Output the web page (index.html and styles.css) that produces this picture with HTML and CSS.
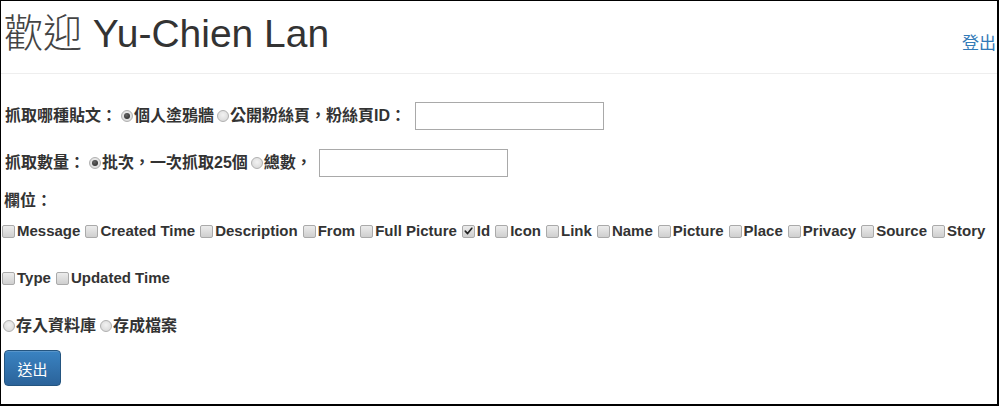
FILE: index.html
```html
<!DOCTYPE html>
<html lang="zh-Hant">
<head>
<meta charset="utf-8">
<title>歡迎</title>
<link rel="stylesheet" href="styles.css">
</head>
<body>
<div class="frame">
  <header class="header">
    <h1 class="title"><span class="cjk-light">歡迎</span> Yu-Chien Lan</h1>
    <a class="logout" href="#">登出</a>
  </header>
  <form class="form">
    <div class="row row-first">
      <span class="label zh">抓取哪種貼文：</span>
      <label class="opt"><span class="radio checked"></span><span class="zh">個人塗鴉牆</span></label>
      <label class="opt"><span class="radio"></span><span class="zh">公開粉絲頁，粉絲頁ID：</span></label>
      <span class="field field-id"></span>
    </div>
    <div class="row row-second">
      <span class="label zh">抓取數量：</span>
      <label class="opt"><span class="radio checked"></span><span class="zh">批次，一次抓取25個</span></label>
      <label class="opt"><span class="radio"></span><span class="zh">總數，</span></label>
      <span class="field field-total"></span>
    </div>
    <div class="line zh">欄位：</div>
    <div class="checks">
      <label class="opt"><span class="box"></span>Message</label>
      <label class="opt"><span class="box"></span>Created Time</label>
      <label class="opt"><span class="box"></span>Description</label>
      <label class="opt"><span class="box"></span>From</label>
      <label class="opt"><span class="box"></span>Full Picture</label>
      <label class="opt"><span class="box checked"><svg viewBox="0 0 12 12" width="12" height="12"><path d="M2.5 6.2 L5 8.8 L9.6 3" fill="none" stroke="#222" stroke-width="1.8" stroke-linecap="round" stroke-linejoin="round"/></svg></span>Id</label>
      <label class="opt"><span class="box"></span>Icon</label>
      <label class="opt"><span class="box"></span>Link</label>
      <label class="opt"><span class="box"></span>Name</label>
      <label class="opt"><span class="box"></span>Picture</label>
      <label class="opt"><span class="box"></span>Place</label>
      <label class="opt"><span class="box"></span>Privacy</label>
      <label class="opt"><span class="box"></span>Source</label>
      <label class="opt"><span class="box"></span>Story</label>
      <label class="opt"><span class="box"></span>Type</label>
      <label class="opt"><span class="box"></span>Updated Time</label>
    </div>
    <div class="line line-save">
      <label class="opt"><span class="radio"></span><span class="zh">存入資料庫</span></label>
      <label class="opt"><span class="radio"></span><span class="zh">存成檔案</span></label>
    </div>
    <button class="submit" type="button">送出</button>
  </form>
</div>
</body>
</html>
```
FILE: styles.css
```css
html, body {
  margin: 0;
  padding: 0;
  background: #fff;
}
.frame {
  box-sizing: border-box;
  width: 999px;
  height: 406px;
  border-top: 1px solid #000;
  border-left: 1px solid #000;
  border-right: 2px solid #000;
  border-bottom: 2px solid #000;
  font-family: "Liberation Sans", "Noto Sans CJK TC", sans-serif;
  color: #333;
  overflow: hidden;
}
.header {
  height: 72px;
  border-bottom: 1px solid #eee;
  display: flex;
  justify-content: space-between;
  align-items: flex-start;
}
.title {
  margin: 0;
  padding: 6px 0 0 3px;
  font-size: 39px;
  font-weight: normal;
  line-height: 46px;
  color: #333;
}
.cjk-light {
  font-family: "Noto Sans CJK TC", sans-serif;
  font-weight: 300;
  color: #444;
}
.logout {
  margin-top: 31px;
  font-family: "Noto Sans CJK TC", sans-serif;
  font-size: 17px;
  line-height: 20px;
  color: #337ab7;
  text-decoration: none;
  margin-right: 1px;
}
.form {
  padding-left: 3px;
  font-size: 15px;
  font-weight: bold;
  line-height: 20px;
}
.zh {
  font-family: "Liberation Sans", "Noto Sans CJK TC", sans-serif;
  font-size: 16px;
}
.row {
  display: flex;
  align-items: center;
  height: 28px;
}
.row-first { margin-top: 28px; }
.row-second { margin-top: 19px; }
.label { margin-left: 1px; margin-right: 1px; }
.opt {
  display: inline-flex;
  align-items: center;
  white-space: nowrap;
}
.radio {
  box-sizing: border-box;
  width: 12px;
  height: 12px;
  border-radius: 50%;
  border: 1px solid #b0b0b0;
  background: radial-gradient(circle at 50% 40%, #f2f2f2 0%, #d4d4d4 100%);
  margin: 0 1px 0 3px;
  position: relative;
  flex: none;
}
.radio.checked::after {
  content: "";
  position: absolute;
  left: 2px;
  top: 2px;
  width: 6px;
  height: 6px;
  border-radius: 50%;
  background: radial-gradient(circle at 40% 35%, #666 0%, #222 100%);
}
.field {
  box-sizing: border-box;
  display: block;
  width: 189px;
  height: 28px;
  border: 1px solid #a9a9a9;
  background: #fff;
}
.field-id { margin-left: 9px; }
.field-total { margin-left: 7px; }
.line {
  margin-top: 14px;
  height: 20px;
  display: flex;
  align-items: center;
}
.checks {
  margin-top: 10px;
  display: flex;
  flex-wrap: wrap;
  column-gap: 5px;
  row-gap: 27px;
  width: 992px;
  margin-left: -2px;
}
.checks .opt { height: 20px; }
.box {
  box-sizing: border-box;
  width: 13px;
  height: 13px;
  border: 1px solid #aaa;
  border-radius: 2px;
  background: linear-gradient(#ececec, #cfcfcf);
  margin-right: 2px;
  display: inline-flex;
  align-items: center;
  justify-content: center;
  flex: none;
}
.box.checked svg { display: block; }
.line-save {
  margin-top: 28px;
  margin-left: -4px;
}
.line-save .opt + .opt { margin-left: 1px; }
.submit {
  display: block;
  margin-top: 14px;
  margin-left: 0;
  width: 57px;
  height: 36px;
  border: 1px solid #245580;
  border-radius: 4px;
  background: linear-gradient(#3a83c2, #2b639a);
  color: #fff;
  font-family: "Noto Sans CJK TC", sans-serif;
  font-size: 15px;
  font-weight: normal;
  padding: 0;
  box-shadow: inset 0 1px 0 rgba(255,255,255,0.15);
}
```
